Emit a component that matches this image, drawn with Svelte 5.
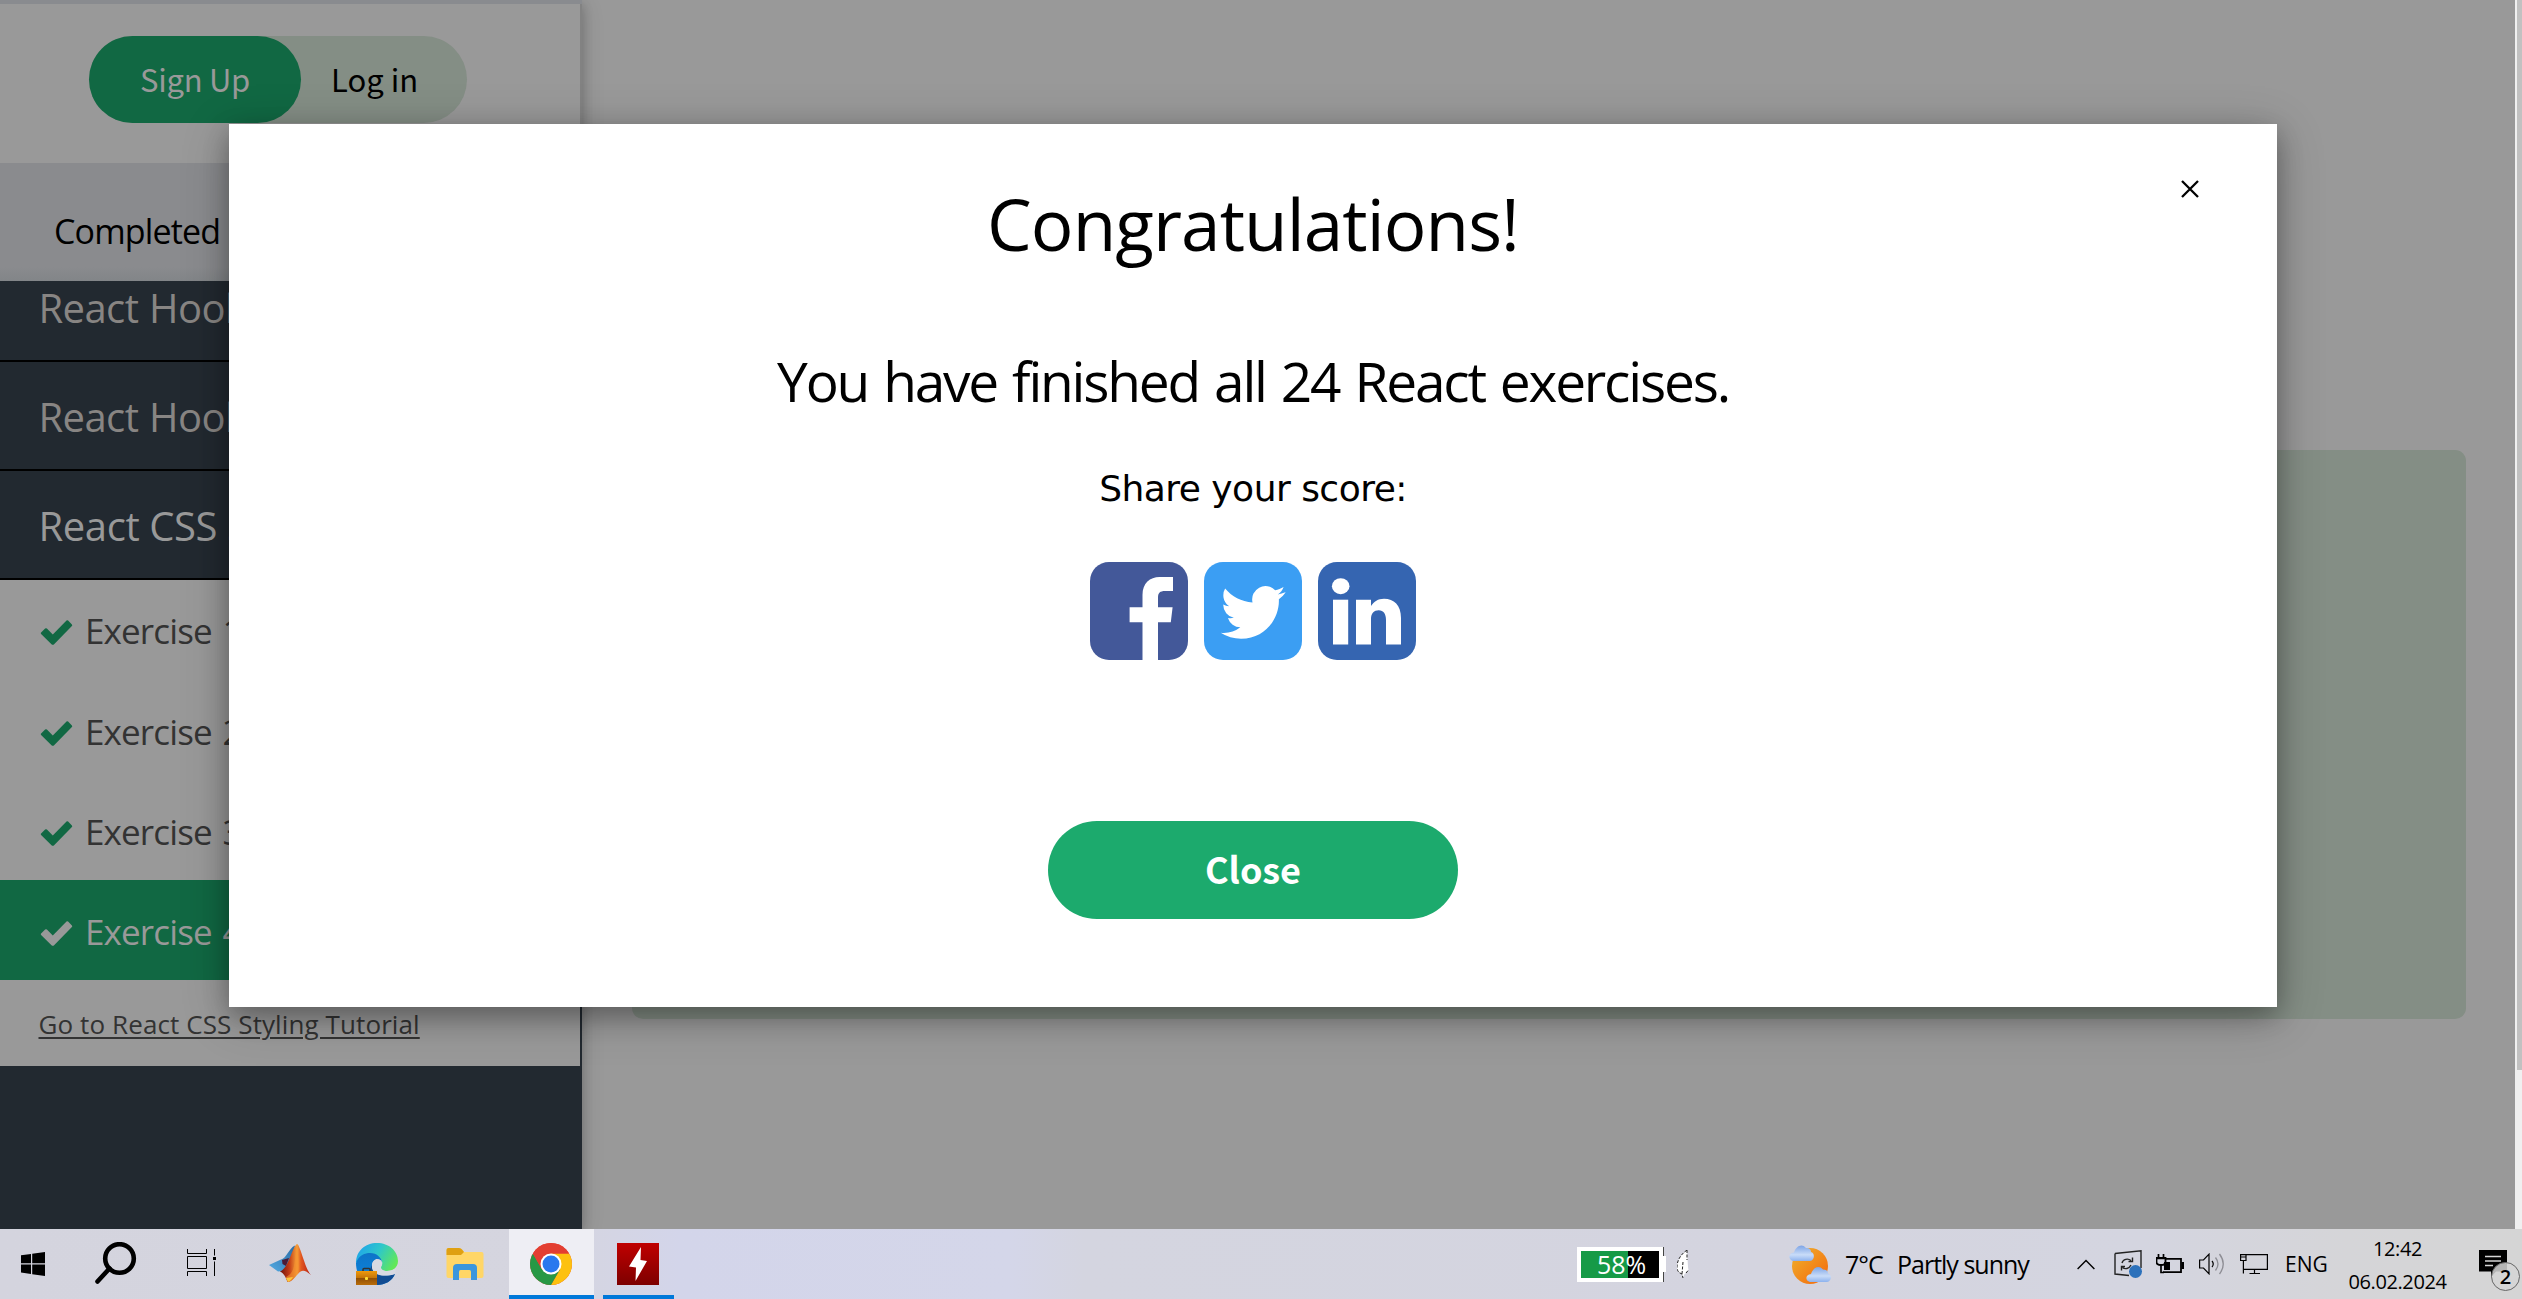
<script>
  const sections = [
    { title: 'React Hooks', open: false },
    { title: 'React Hooks', open: false },
    { title: 'React CSS Styling', open: true }
  ];
  const exercises = [1, 2, 3, 4];
  const current = 4;
</script>

<div class="desktop">
  <div class="page">
    <aside class="sidebar">
      <div class="strip"></div>
      <div class="account">
        <div class="pill">
          <button class="signup">Sign Up</button>
          <button class="login">Log in</button>
        </div>
      </div>
      <div class="progress">Completed 24 of 24 Exercises:</div>
      <nav class="menu">
        {#each sections as s}
          <div class="section" class:open={s.open}>{s.title}</div>
        {/each}
        <div class="exercises">
          {#each exercises as n}
            <div class="exercise" class:current={n === current}>
              <svg class="check" viewBox="0 0 32 25" width="33" height="25">
                <path d="M4.6 8.6 L0.6 12.6 Q0 13.3 0.6 14 L11 24.2 Q12.3 25.2 13.6 24.2 L31.4 6 Q32 5.2 31.4 4.4 L27.6 0.6 Q26.8 0 26 0.6 L12.3 14.5 L6.4 8.6 Q5.5 7.8 4.6 8.6Z" />
              </svg>
              <span>Exercise {n}</span>
            </div>
          {/each}
          <div class="tutorial"><a href="#tutorial">Go to React CSS Styling Tutorial</a></div>
        </div>
      </nav>
    </aside>
    <main class="content">
      <div class="question"></div>
    </main>
    <div class="scrollbar"><div class="thumb"></div></div>

    <div class="modal">
      <button class="dismiss" aria-label="Dismiss">
        <svg viewBox="0 0 18 18" width="18" height="18"><path d="M1 1 17 17M17 1 1 17" stroke="#000" stroke-width="2.3" /></svg>
      </button>
      <h1>Congratulations!</h1>
      <h2>You have finished all 24 React exercises.</h2>
      <p class="share">Share your score:</p>
      <div class="socials">
        <svg viewBox="0 0 98 98" width="98" height="98">
          <rect width="98" height="98" rx="19" fill="#435899" />
          <path d="M52.5 98V60.3H39.6V45.3H52.5V33C52.5 21 60 15 69.5 15H83V29H75C70 29 68 31 68 35.5V45.3H82.6L80.8 60.3H68V98Z" fill="#fff" />
        </svg>
        <svg viewBox="0 0 98 98" width="98" height="98">
          <rect width="98" height="98" rx="19" fill="#3b9ef3" />
          <path transform="translate(16.7 18) scale(2.7)" fill="#fff" d="M23.953 4.57a10 10 0 01-2.825.775 4.958 4.958 0 002.163-2.723c-.951.555-2.005.959-3.127 1.184a4.92 4.92 0 00-8.384 4.482C7.69 8.095 4.067 6.13 1.64 3.162a4.822 4.822 0 00-.666 2.475c0 1.71.87 3.213 2.188 4.096a4.904 4.904 0 01-2.228-.616v.06a4.923 4.923 0 003.946 4.827 4.996 4.996 0 01-2.212.085 4.936 4.936 0 004.604 3.417 9.867 9.867 0 01-6.102 2.105c-.39 0-.779-.023-1.17-.067a13.995 13.995 0 007.557 2.209c9.053 0 13.998-7.496 13.998-13.985 0-.21 0-.42-.015-.63A9.935 9.935 0 0024 4.59z" />
        </svg>
        <svg viewBox="0 0 98 98" width="98" height="98">
          <rect width="98" height="98" rx="19" fill="#3565b1" />
          <ellipse cx="22.7" cy="24.2" rx="8.8" ry="8" fill="#fff" />
          <rect x="15" y="37.7" width="15.2" height="44.8" fill="#fff" />
          <path d="M38 82.5V37.7H53V44C56 39.500 60 36.700 66 36.700C76 36.700 83 43 83 56V82.500H68V58C68 52 65.500 48.300 60.700 48.300C56 48.300 53 51.500 53 57V82.500Z" fill="#fff" />
        </svg>
      </div>
      <button class="close">Close</button>
    </div>
  </div>

  <footer class="taskbar">
    <div class="task start">
      <svg viewBox="0 0 24 24" width="24" height="24"><path d="M0 3.300 10 1.900V11.200H0ZM11.200 1.700 24 0V11.200H11.200ZM0 12.400H10V21.900L0 20.600ZM11.200 12.400H24V24L11.200 22.200Z" /></svg>
    </div>
    <div class="task search">
      <svg viewBox="0 0 42 42" width="42" height="42"><circle cx="24.500" cy="16.500" r="14.300" fill="none" stroke="#000" stroke-width="4.600" /><path d="M14.500 26.500 2.500 39.500" stroke="#000" stroke-width="4.600" stroke-linecap="round" /></svg>
    </div>
    <div class="task view">
      <svg viewBox="0 0 30 28" width="30" height="28"><path d="M.5 0V4.500H19.500V0M.5 7.500H19.500V19.500H.5ZM.5 27V22.500H19.500V27M27.500 0V6.500M27.500 12.500V27" fill="none" stroke="#000" /><rect x="26" y="8" width="3" height="3" /></svg>
    </div>
    <div class="task matlab">
      <svg viewBox="0 0 42 38" width="42" height="38">
        <defs>
          <linearGradient id="mlBlue" x1="0" y1="1" x2="1" y2="0"><stop offset="0" stop-color="#55abe2" /><stop offset="1" stop-color="#276aa5" /></linearGradient>
          <linearGradient id="mlRed"><stop offset="0" stop-color="#6d120c" /><stop offset=".3" stop-color="#c23b16" /><stop offset=".55" stop-color="#f5a03a" /><stop offset=".68" stop-color="#e2571f" /><stop offset="1" stop-color="#b51f16" /></linearGradient>
        </defs>
        <path d="M0 21 12 15.500C17 15 20 4 26 1.500L24 12 14 27 9 27.500Z" fill="url(#mlBlue)" />
        <path d="M13 16 20 14 17 22 13.500 20Z" fill="#4b1a35" />
        <path d="M28 0C31 0 36 25 42 31C36 26 33 25 29 30C25 34 23 38 18.500 38C17 34 15 29 11 27.500C20 24 23 3 28 0Z" fill="url(#mlRed)" />
        <path d="M28 3C25 14 27 22 22 29C20 32 17 32 17 34L19 38C25 37 26 31 29 28C31 22 29 10 28 3Z" fill="#f7922e" opacity=".6" />
        <path d="M17 34 19 38C21 37.500 23 35 24 33Z" fill="#fbc63c" />
      </svg>
    </div>
    <div class="task edge">
      <svg viewBox="0 0 42 42" width="42" height="42">
        <defs>
          <linearGradient id="edTop" x1="0" y1=".2" x2="1" y2=".6"><stop offset="0" stop-color="#1fa2ec" /><stop offset=".5" stop-color="#2ec7ca" /><stop offset="1" stop-color="#62e858" /></linearGradient>
          <linearGradient id="edMid" x1="0" y1="0" x2="0" y2="1"><stop offset="0" stop-color="#0e74c8" /><stop offset="1" stop-color="#0c86de" /></linearGradient>
          <linearGradient id="edCase" x1="0" y1="0" x2="0" y2="1"><stop offset="0" stop-color="#f09a0c" /><stop offset=".5" stop-color="#c47408" /><stop offset=".5" stop-color="#8e4d05" /><stop offset="1" stop-color="#b96d0a" /></linearGradient>
        </defs>
        <path d="M0 20C0 8 9 0 21 0C33 0 42 8 42 18C42 25 36 28 31 28C27 28 24 26 25 24C28 20 26 15 20 15C12 15 10 10 0 20Z" fill="url(#edTop)" />
        <path d="M0 20C3 12 9 10 14 10C21 10 26 15 26 20C25 16 17 15 16 22C15 30 21 34 26 33C32 33 36 32 39 31C36 38 29 42 21 42C8 42 0 33 0 20Z" fill="url(#edMid)" />
        <path d="M16 22C15 31 24 35 39 31C36 38 29 42 21 42C15 38 12 28 16 22Z" fill="#114b92" />
        <path d="M16 23C16 18 19 16 21 16C26 16 27 20 25 24C25 27 28 28 31 28C34 28 38 27 40 25L39 31C27 35 16 31 16 23Z" fill="#d8d9e2" />
        <path d="M7 28V26.500Q7 25.500 8 25.500H13Q14 25.500 14 26.500V28" fill="none" stroke="#333" stroke-width="1.500" />
        <rect y="28" width="21" height="14" fill="url(#edCase)" /><rect x="9" y="34" width="3" height="3" rx="1" fill="#ffdc30" />
      </svg>
    </div>
    <div class="task explorer">
      <svg viewBox="0 0 38 32" width="38" height="32">
        <path d="M.5 2Q.5 0 2.500 0H13Q15 0 16 1.500L18 4H35.500Q37.500 4 37.500 6V28Q37.500 30 35.500 30H2.500Q.5 30 .5 28Z" fill="#ffd667" />
        <path d="M.5 2Q.5 0 2.500 0H13Q15 0 16 1.500L18 4L15.500 6.500Q15 7 14 7H.5Z" fill="#dfa012" />
        <path d="M7 32V20Q7 16 11 16H27Q31 16 31 20V32H25V24Q25 22 23.500 22H14.500Q13 22 13 24V32Z" fill="#3a96dd" />
      </svg>
    </div>
    <div class="task chrome">
      <svg viewBox="0 0 42 42" width="42" height="42">
        <defs><clipPath id="disc"><circle cx="21" cy="21" r="21" /></clipPath></defs>
        <g clip-path="url(#disc)">
          <rect width="42" height="42" fill="#ea4335" />
          <path d="M21 10.500H42V42H21L30.100 26.250Z" fill="#fdc10f" />
          <path d="M2.800 10.500 11.900 26.250 21 31.500 30.100 26.250 21 42H0V10.500Z" fill="#279845" />
          <path d="M0 0H42L39.200 10.500H21L11.900 26.250 2.800 10.500Z" fill="#e33e31" />
        </g>
        <circle cx="21" cy="21" r="10.500" fill="#fff" /><circle cx="21" cy="21" r="8.500" fill="#2a78ee" />
      </svg>
    </div>
    <div class="task flash">
      <svg viewBox="0 0 42 42" width="42" height="42">
        <defs><linearGradient id="fl" x1="0" y1="0" x2="0" y2="1"><stop offset="0" stop-color="#c00000" /><stop offset="1" stop-color="#7d0000" /></linearGradient></defs>
        <rect width="42" height="42" fill="url(#fl)" /><path d="M24 4 12 23.500 19 24.500 18.500 38 30 18 23.500 17Z" fill="#fff" />
      </svg>
    </div>

    <div class="battery"><div class="cell"><span>58%</span></div><div class="nub"></div></div>
    <svg class="leaf" viewBox="0 0 12 28" width="12" height="28">
      <path d="M10 0C3 5 0 11 0 17C0 21 2 23 5 24L6 28L7.500 24C9 23 10.500 22 11.500 20L11 17Z" fill="#fff" />
      <path d="M10 0C3 5 0 11 0 17C0 21 2 23 5 24L6 28M6 12 5 24M10 0V10M9 23 11.500 20" fill="none" stroke="#222" stroke-width="1" stroke-dasharray="3 1.500" />
    </svg>
    <div class="weather">
      <svg viewBox="0 0 42 39" width="42" height="39">
        <defs>
          <linearGradient id="sun" x1="0" y1="0" x2="1" y2="1"><stop offset="0" stop-color="#efb32d" /><stop offset="1" stop-color="#f4660c" /></linearGradient>
          <linearGradient id="cloud" x1="0" y1="0" x2="0" y2="1"><stop offset="0" stop-color="#7da4e6" /><stop offset=".6" stop-color="#c9dcf8" /><stop offset="1" stop-color="#8db2ee" /></linearGradient>
        </defs>
        <circle cx="21" cy="21" r="18" fill="url(#sun)" />
        <path d="M4 16C-1 15 -1 8 5 7.500C7 1 13-2 17 3C21 3 22 5 22 7C26 8 26 15 21 16Z" fill="url(#cloud)" />
        <path transform="translate(17 21.500)" d="M4 15.500C-1 14.500 -1 8 5 7.500C7 1 13-2 17 3C21 3 22 5 22 7C26 8 26 14.500 21 15.500Z" fill="url(#cloud)" />
      </svg>
      <span class="deg">7°C</span><span>Partly sunny</span>
    </div>
    <svg class="chevron" viewBox="0 0 18 11" width="18" height="11"><path d="M.6 10 9 1.400 17.400 10" fill="none" stroke="#000" stroke-width="1.400" /></svg>
    <svg class="sync" viewBox="0 0 28 28" width="28" height="28">
      <path d="M1 3.500 27 .8V18M1 3.500V24L15 25.500" fill="none" stroke="#222" stroke-width="1.400" />
      <path d="M8 13C9 9 14 8 17 10.500M18.500 7.500V11.500H14.500M17 15C15 19 11 19.500 8.500 17.500M7.500 20.500V16.500H11" fill="none" stroke="#222" stroke-width="1.400" />
      <circle cx="21.500" cy="21.500" r="6.500" fill="#2c71bb" />
    </svg>
    <svg class="plug" viewBox="0 0 28 20" width="28" height="20">
      <path d="M2.500 0V4M7.500 0V4M.5 4.500H9.500M5 10V18.500H8" fill="none" stroke="#000" stroke-width="1.700" /><path d="M.5 4H9.500V8Q9.500 11 5 11Q.5 11 .5 8Z" fill="none" stroke="#000" stroke-width="1.800" />
      <path d="M10 4.800H25V18.200H7" fill="none" stroke="#000" stroke-width="1.800" /><rect x="8" y="8" width="6" height="8" /><rect x="25.500" y="8" width="2.500" height="7" />
    </svg>
    <svg class="speaker" viewBox="0 0 28 22" width="28" height="22">
      <path d="M.6 7H4.500L10 1.200V20.800L4.500 15H.6Z" fill="none" stroke="#000" stroke-width="1.200" /><path d="M13 8Q15.500 11 13 14" fill="none" stroke="#000" stroke-width="1.200" />
      <path d="M16.500 4.500Q21.500 11 16.500 17.500M20.500 1Q28 11 20.500 21" fill="none" stroke="#8d8d94" stroke-width="1.300" />
    </svg>
    <svg class="network" viewBox="0 0 28 21" width="28" height="21">
      <path d="M6 .6H27.400V15.400H4M14.500 15.400V19.500M9.500 19.500H20M.6 .6H6V6.500H.6ZM3.400 6.500V19.500M.6 3H6" fill="none" stroke="#000" stroke-width="1.200" />
    </svg>
    <span class="lang">ENG</span>
    <div class="clock"><span>12:42</span><span class="date">06.02.2024</span></div>
    <div class="notify">
      <svg viewBox="0 0 28 28" width="28" height="28"><path d="M0 0H28V21.500H17L12 27V21.500H0Z" /><path d="M6 6.500H22M6 11H22M6 15.500H14" stroke="#d5d5d5" stroke-width="1.300" /></svg>
      <span class="badge">2</span>
    </div>
  </footer>
</div>

<style>
  :global(body) { margin: 0; overflow: hidden; }
  * { box-sizing: border-box; }
  button { border: 0; padding: 0; margin: 0; background: none; font: inherit; color: inherit; }
  svg { display: block; flex: none; }
  .desktop { width: 2522px; height: 1299px; display: flex; flex-direction: column; font-family: "Open Sans", "Noto Sans", sans-serif; overflow: hidden; }
  .page { position: relative; height: 1229px; flex: none; display: flex; background: #999; overflow: hidden; }

  .sidebar { width: 582px; flex: none; display: flex; flex-direction: column; background: #222930; z-index: 1; box-shadow: 0 5px 11px rgba(0,0,0,.2), 0 5px 22px rgba(0,0,0,.14); }
  .strip { height: 4px; background: #898b8f; }
  .account { height: 159px; padding: 32px 0 0 89px; background: #999; border-right: 2px solid #828282; }
  .pill { width: 378px; height: 87px; border-radius: 44px; background: #848e85; display: flex; font: 31px/85px "Noto Sans CJK SC", sans-serif; }
  .signup { width: 212px; border-radius: 44px; background: #116843; color: #999; letter-spacing: -.3px; padding-bottom: 2px; }
  .login { padding: 0 0 2px 30px; color: #000; }
  .progress { height: 118px; padding: 17px 0 0 54px; line-height: 102px; font-size: 34px; letter-spacing: -.85px; white-space: nowrap; background: linear-gradient(#8a8b8e 88%, #828588); border-right: 2px solid #777; }
  .menu { overflow: hidden; flex: 1; }
  .section { height: 109px; border-bottom: 2px solid #000; padding: 2px 0 0 38.500px; line-height: 105px; font-size: 40px; letter-spacing: -.6px; word-spacing: 1px; color: #888583; }
  .section:first-child { margin-top: -28px; }
  .section.open { color: #999; letter-spacing: -.4px; word-spacing: 0; }
  .exercises { width: 580px; background: #999; }
  .exercise { height: 100px; padding: 3px 0 0 40px; display: flex; align-items: center; font-size: 35px; letter-spacing: -.86px; word-spacing: 2.500px; color: #333; line-height: 97px; }
  .exercise:first-child { padding-top: 1px; }
  .exercise span { margin-left: 12px; }
  .check { fill: #116843; margin-top: 4px; }
  .current { background: #116843; color: #999; }
  .current .check { fill: #999; }
  .tutorial { height: 86px; padding: 2px 0 0 38.500px; line-height: 84px; font-size: 26px; letter-spacing: .1px; }
  .tutorial a { color: #333; text-decoration: underline; text-decoration-thickness: 2px; text-underline-offset: 3px; }

  .content { flex: 1; padding: 450px 49px 0 50px; }
  .question { height: 569px; border-radius: 11px; background: #848e85; }
  .scrollbar { width: 7px; background: #f0f0f0; padding-left: 2px; }
  .thumb { height: 1070px; background: #c1c1c1; }

  .modal { position: absolute; z-index: 2; left: 229px; top: 124px; width: 2048px; height: 883px; padding-top: 50px; background: #fff; color: #000; display: flex; flex-direction: column; align-items: center; box-shadow: 0 9px 23px rgba(0,0,0,.25), 0 9px 45px rgba(0,0,0,.24); }
  .dismiss { position: absolute; top: 56px; right: 78px; }
  h1 { margin: 0; font-weight: 400; font-size: 71px; line-height: 99px; letter-spacing: -.9px; }
  h2 { margin: 68px 0 0; font-weight: 400; font-size: 55px; line-height: 80px; letter-spacing: -2.200px; word-spacing: 3px; }
  .share { margin: 43px 0 48px; font: 36px/50px "DejaVu Sans", sans-serif; letter-spacing: -.52px; }
  .socials { display: flex; gap: 16px; }
  .close { margin-top: 161px; width: 410px; height: 98px; border-radius: 49px; background: #1caa6d; color: #fff; font: 700 36px/94px "Noto Sans CJK SC", sans-serif; padding-bottom: 4px; }

  .taskbar { height: 70px; display: flex; align-items: center; background: linear-gradient(90deg, #d4d4de 0%, #d5d5df 22%, #d3d5ea 27%, #d4d6e9 40%, #d4d5e0 43%, #d4d4df 70%, #d4d5e0 85%, #d5d5d8 93%, #d5d5d5 100%); }
  .task { height: 70px; flex: none; display: flex; align-items: center; justify-content: center; }
  .start { width: 66px; }
  .search { width: 100px; padding-bottom: 2px; }
  .view { width: 71px; padding-bottom: 2px; }
  .matlab { width: 106px; padding-bottom: 2px; }
  .edge { width: 68px; }
  .explorer { width: 98px; padding-left: 10px; }
  .chrome { width: 85px; background: #eeeef4; border-bottom: 4px solid #0078d9; padding-top: 3px; padding-right: 1px; }
  .flash { width: 71px; margin-left: 9px; border-bottom: 4px solid #0078d9; padding-top: 3px; padding-right: 1px; }
  .battery { margin-left: 903px; display: flex; align-items: center; flex: none; }
  .cell { width: 86px; height: 35px; border: 4px solid #fff; background: linear-gradient(90deg, #169a47 60.500%, #000 60.500%); color: #fff; font-size: 25px; line-height: 26px; padding-left: 16px; box-shadow: 1px 0 #444; }
  .nub { width: 4px; height: 16px; background: #fff; margin-left: -1px; z-index: 1; }
  .leaf { margin-left: 11px; }
  .weather { margin-left: 100px; display: flex; align-items: center; font-size: 25px; letter-spacing: -1px; white-space: nowrap; line-height: 70px; width: 242px; flex: none; }
  .deg { margin: 0 16px 0 14px; width: 36px; }
  .chevron { margin-left: 46px; }
  .sync { margin-left: 19px; }
  .plug { margin-left: 14px; }
  .speaker { margin-left: 15px; }
  .network { margin-left: 13px; }
  .lang { margin-left: 17px; width: 42px; font-size: 21px; line-height: 71px; flex: none; }
  .clock { margin-left: 18px; width: 105px; display: flex; flex-direction: column; align-items: center; font-size: 20px; line-height: 33px; letter-spacing: -.4px; flex: none; padding-top: 2px; }
  .notify { position: relative; margin-left: 29px; flex: none; }
  .badge { position: absolute; left: 12px; top: 12px; width: 29px; height: 29px; border: 1px solid #666; border-radius: 50%; background: rgba(213,213,213,.85); font-size: 20px; line-height: 27px; text-align: center; font-weight: 600; }
</style>
